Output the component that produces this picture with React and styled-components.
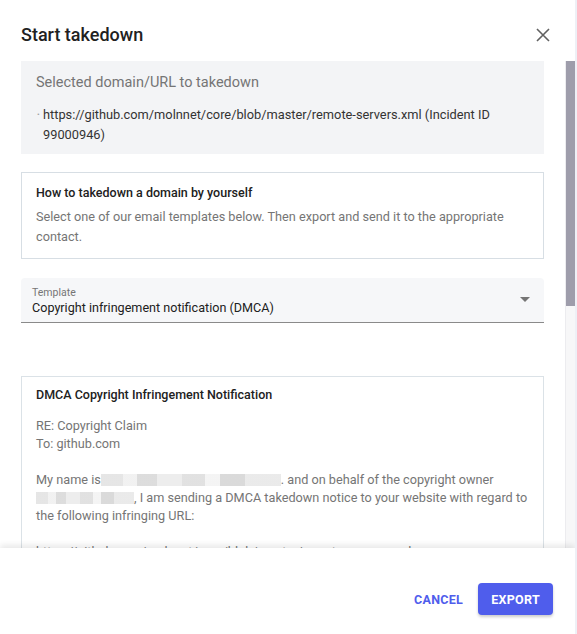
import React from 'react';
import styled, { createGlobalStyle } from 'styled-components';

const GlobalStyle = createGlobalStyle`
  html, body {
    margin: 0;
    padding: 0;
    background: #eef0f6;
  }
  body {
    font-family: Roboto, "Noto Sans", "Liberation Sans", sans-serif;
    -webkit-font-smoothing: antialiased;
  }
`;

const Dialog = styled.div`
  width: 575px;
  height: 100vh;
  background: #fff;
  display: flex;
  flex-direction: column;
  overflow: hidden;
`;

const Header = styled.div`
  height: 61px;
  box-sizing: border-box;
  padding: 23px 20px 0 21px;
  display: flex;
  justify-content: space-between;
  align-items: flex-start;
  flex-shrink: 0;
`;

const Title = styled.h2`
  margin: 0;
  font-size: 18px;
  line-height: 24px;
  font-weight: 500;
  color: #212121;
`;

const CloseButton = styled.button`
  border: none;
  background: transparent;
  padding: 0;
  width: 24px;
  height: 24px;
  display: inline-flex;
  align-items: center;
  justify-content: center;
  cursor: pointer;
  color: #616161;
`;

const Main = styled.div`
  flex: 1;
  min-height: 0;
  display: flex;
`;

const Body = styled.div`
  flex: 1;
  overflow: hidden;
  padding: 0 21px;
`;

const ScrollTrack = styled.div`
  width: 9px;
  flex-shrink: 0;
  background: #f7f7f8;
  border-left: 1px solid #ececef;
  display: flex;
  flex-direction: column;
`;

const ScrollThumb = styled.div`
  height: ${(p) => p.$h}px;
  background: #9e9dab;
`;

const InfoBox = styled.div`
  background: #f3f4f6;
  padding: 11px 15px 9px;
`;

const InfoTitle = styled.div`
  font-size: 14.5px;
  line-height: 22px;
  color: #757575;
`;

const List = styled.ul`
  list-style: none;
  margin: 11px 0 0;
  padding: 0 0 0 1px;
`;

const Item = styled.li`
  display: flex;
  font-size: 12.8px;
  line-height: 20px;
  color: #333;
`;

const Bullet = styled.span`
  width: 6px;
  flex-shrink: 0;
  color: #a0a0a0;
  font-size: 8px;
`;

const Card = styled.div`
  border: 1px solid ${(p) => p.$border || '#d7dee4'};
  margin-top: ${(p) => p.$top}px;
  padding: ${(p) => p.$pad};
`;

const CardTitle = styled.div`
  font-size: 12.5px;
  line-height: 20px;
  font-weight: 500;
  color: #212121;
`;

const CardText = styled.div`
  font-size: 12.7px;
  line-height: ${(p) => p.$lh || 20}px;
  color: #757575;
  margin-top: ${(p) => p.$top || 0}px;
`;

const Select = styled.div`
  margin-top: 19px;
  background: #f6f7f9;
  border-radius: 4px 4px 0 0;
  border-bottom: 1px solid #8a8a8a;
  padding: 8px 12px 6px 11px;
  display: flex;
  align-items: center;
  justify-content: space-between;
`;

const SelectLabel = styled.div`
  font-size: 10.5px;
  line-height: 13px;
  color: #757575;
`;

const SelectValue = styled.div`
  font-size: 12.6px;
  line-height: 16px;
  color: #212121;
  margin-top: 1px;
`;

const Arrow = styled.span`
  width: 0;
  height: 0;
  border-left: 5px solid transparent;
  border-right: 5px solid transparent;
  border-top: 5px solid #757575;
  margin-right: 2px;
  margin-top: -3px;
`;

const Blur = styled.span`
  display: inline-block;
  vertical-align: -2px;
  width: ${(p) => p.$w}px;
  height: 12px;
  background:
    linear-gradient(90deg, #e3e3e3 0 12%, #f0f0f0 12% 20%, #d9d9d9 20% 31%, #ebebeb 31% 45%, #dedede 45% 58%, #f3f3f3 58% 66%, #d6d6d6 66% 80%, #e8e8e8 80% 100%);
  opacity: 0.9;
`;

const Paragraph = styled.p`
  margin: 0 0 18px;
`;

const Footer = styled.div`
  flex-shrink: 0;
  height: 86px;
  box-sizing: border-box;
  padding: 35px 22px 0;
  display: flex;
  justify-content: flex-end;
  align-items: flex-start;
  gap: 7px;
  background: #fff;
  box-shadow: 0 -3px 6px rgba(0, 0, 0, 0.09);
  position: relative;
  z-index: 1;
`;

const Button = styled.button`
  font-family: Roboto, "Noto Sans", "Liberation Sans", sans-serif;
  font-size: 12.5px;
  font-weight: 700;
  letter-spacing: 0.3px;
  height: 32px;
  padding: 0 ${(p) => (p.$primary ? 13 : 8)}px;
  border: none;
  border-radius: 4px;
  cursor: pointer;
  color: ${(p) => (p.$primary ? '#fff' : '#4f5dec')};
  background: ${(p) => (p.$primary ? '#4f5dec' : 'transparent')};
  box-shadow: ${(p) => (p.$primary ? '0 2px 3px rgba(0,0,0,0.2)' : 'none')};
`;

export default function App() {
  return (
    <>
      <GlobalStyle />
      <Dialog>
        <Header>
          <Title>Start takedown</Title>
          <CloseButton aria-label="Close">
            <svg width="14" height="14" viewBox="0 0 14 14">
              <path d="M1 1L13 13M13 1L1 13" stroke="currentColor" strokeWidth="1.6" />
            </svg>
          </CloseButton>
        </Header>
        <Main>
          <Body>
            <InfoBox>
              <InfoTitle>Selected domain/URL to takedown</InfoTitle>
              <List>
                <Item>
                  <Bullet>•</Bullet>
                  <span>https://github.com/molnnet/core/blob/master/remote-servers.xml (Incident ID 99000946)</span>
                </Item>
              </List>
            </InfoBox>
            <Card $top={18} $pad="10px 14px 11px">
              <CardTitle>How to takedown a domain by yourself</CardTitle>
              <CardText $top={4}>
                Select one of our email templates below. Then export and send it to the appropriate contact.
              </CardText>
            </Card>
            <Select>
              <div>
                <SelectLabel>Template</SelectLabel>
                <SelectValue>Copyright infringement notification (DMCA)</SelectValue>
              </div>
              <Arrow />
            </Select>
            <Card $top={53} $pad="8px 14px 20px" $border="#dbe2e7">
              <CardTitle>DMCA Copyright Infringement Notification</CardTitle>
              <CardText $top={12} $lh={18}>
                <Paragraph>
                  RE: Copyright Claim
                  <br />
                  To: github.com
                </Paragraph>
                <Paragraph>
                  My name is<Blur $w={180} />. and on behalf of the copyright owner <Blur $w={98} />, I am
                  sending a DMCA takedown notice to your website with regard to the following infringing URL:
                </Paragraph>
                <Paragraph>
                  https://github.com/molnnet/core/blob/master/remote-servers.xml
                </Paragraph>
                <Paragraph>
                  The above URL contains material that infringes upon the copyright of the owner.
                </Paragraph>
              </CardText>
            </Card>
          </Body>
          <ScrollTrack>
            <ScrollThumb $h={245} />
          </ScrollTrack>
        </Main>
        <Footer>
          <Button>CANCEL</Button>
          <Button $primary>EXPORT</Button>
        </Footer>
      </Dialog>
    </>
  );
}
